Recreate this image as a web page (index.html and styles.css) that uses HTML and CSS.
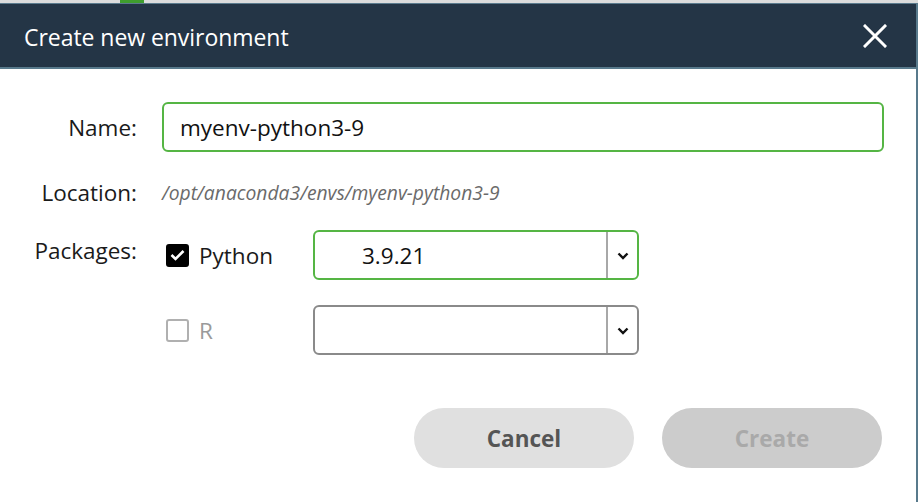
FILE: index.html
```html
<!DOCTYPE html>
<html>
<head>
<meta charset="utf-8">
<link rel="stylesheet" href="styles.css">
</head>
<body>
<div class="topstrip"><span class="strip-gap"></span><span class="strip-mark"></span></div>
<div class="dialog">
  <div class="header">
    <div class="title">Create new environment</div>
    <button class="close" aria-label="Close">
      <svg width="24" height="24" viewBox="0 0 24 24"><path d="M2 2 L22 22 M22 2 L2 22" stroke="#fff" stroke-width="3" fill="none" stroke-linecap="square"/></svg>
    </button>
  </div>
  <div class="body">
    <div class="row row-name">
      <div class="label">Name:</div>
      <div class="input">myenv-python3-9</div>
    </div>
    <div class="row row-loc">
      <div class="label">Location:</div>
      <div class="path">/opt/anaconda3/envs/myenv-python3-9</div>
    </div>
    <div class="row row-pkg">
      <div class="label label-pkg">Packages:</div>
      <div class="pkg">
        <span class="check checked">
          <svg width="15" height="12" viewBox="0 0 15 12"><path d="M1.5 6 L5.5 10 L13.5 2" stroke="#fff" stroke-width="2.6" fill="none"/></svg>
        </span>
        <span class="pkg-name">Python</span>
      </div>
      <div class="select active">
        <span class="select-value">3.9.21</span>
        <span class="select-arrow">
          <svg width="12" height="8" viewBox="0 0 12 8"><path d="M1.5 1.5 L6 6 L10.5 1.5" stroke="#111" stroke-width="2.4" fill="none"/></svg>
        </span>
      </div>
    </div>
    <div class="row row-r">
      <div class="label"></div>
      <div class="pkg disabled">
        <span class="check"></span>
        <span class="pkg-name">R</span>
      </div>
      <div class="select">
        <span class="select-value"></span>
        <span class="select-arrow">
          <svg width="12" height="8" viewBox="0 0 12 8"><path d="M1.5 1.5 L6 6 L10.5 1.5" stroke="#111" stroke-width="2.4" fill="none"/></svg>
        </span>
      </div>
    </div>
    <div class="actions">
      <button class="btn btn-cancel">Cancel</button>
      <button class="btn btn-create">Create</button>
    </div>
  </div>
</div>
</body>
</html>
```

FILE: styles.css
```css
* { box-sizing: border-box; }
html, body { margin: 0; padding: 0; }
body {
  width: 918px;
  height: 502px;
  overflow: hidden;
  background: #ffffff;
  font-family: "Open Sans", "Noto Sans", sans-serif;
  color: #1a1a1a;
}
.topstrip {
  height: 4px;
  background: #dcdcdc;
  display: flex;
  border-bottom: 1px solid #5b7b8e;
}
.strip-gap { width: 120px; }
.strip-mark { width: 24px; height: 3px; background: #3f9e2e; }
.dialog {
  width: 918px;
  height: 498px;
  border-right: 2px solid #587a8c;
  display: flex;
  flex-direction: column;
}
.header {
  height: 65px;
  background: #243546;
  border-bottom: 2px solid #587a8c;
  display: flex;
  align-items: center;
  justify-content: space-between;
  padding: 0 29px 0 24px;
  flex-shrink: 0;
}
.title {
  color: #ffffff;
  font-size: 23px;
  letter-spacing: -0.05px;
  padding-top: 2px;
}
.close {
  background: none;
  border: 0;
  padding: 0;
  width: 24px;
  height: 24px;
  display: flex;
}
.body {
  padding: 33px 32px 0 0;
  display: flex;
  flex-direction: column;
}
.row {
  display: grid;
  grid-template-columns: 137px 1fr;
  column-gap: 25px;
  align-items: center;
}
.label {
  text-align: right;
  font-size: 22.5px;
  color: #1a1a1a;
}
.input {
  height: 50px;
  border: 2px solid #55b544;
  border-radius: 6px;
  padding: 0 16px;
  display: flex;
  align-items: center;
  font-size: 22.5px;
  color: #111;
}
.row-loc {
  height: 50px;
  margin-top: 15px;
}
.path {
  font-style: italic;
  font-size: 19.3px;
  color: #6a6a6a;
}
.row-pkg, .row-r {
  grid-template-columns: 137px 176px 326px;
  column-gap: 0;
}
.row-pkg { margin-top: 13px; }
.row-r { margin-top: 25px; }
.label-pkg { align-self: start; padding-top: 5px; }
.pkg {
  display: flex;
  align-items: center;
  gap: 10px;
  margin-left: 25px;
  padding-left: 4px;
  font-size: 22.5px;
}
.check {
  width: 23px;
  height: 23px;
  border-radius: 3px;
  border: 2px solid #b0b0b0;
  display: flex;
  align-items: center;
  justify-content: center;
  background: #fff;
}
.check.checked {
  background: #000;
  border-color: #000;
}
.pkg.disabled .pkg-name { color: #9a9a9a; }
.select {
  height: 50px;
  border: 2px solid #8a8a8a;
  border-radius: 6px;
  display: flex;
  align-items: stretch;
  font-size: 22.5px;
}
.select.active { border-color: #55b544; }
.select-value {
  flex: 1;
  display: flex;
  align-items: center;
  padding-left: 47px;
  color: #111;
}
.select-arrow {
  width: 31px;
  border-left: 2px solid #a8a8a8;
  display: flex;
  align-items: center;
  justify-content: center;
  padding-top: 1px;
}
.actions {
  display: flex;
  justify-content: flex-end;
  gap: 28px;
  margin-top: 53px;
  padding-right: 2px;
}
.btn {
  width: 220px;
  height: 60px;
  border: 0;
  border-radius: 30px;
  font-family: "Open Sans", "Noto Sans", sans-serif;
  font-weight: 700;
  font-size: 22.5px;
}
.btn-cancel { background: #e0e0e0; color: #555555; }
.btn-create { background: #cccccc; color: #a9a9a9; }
```
